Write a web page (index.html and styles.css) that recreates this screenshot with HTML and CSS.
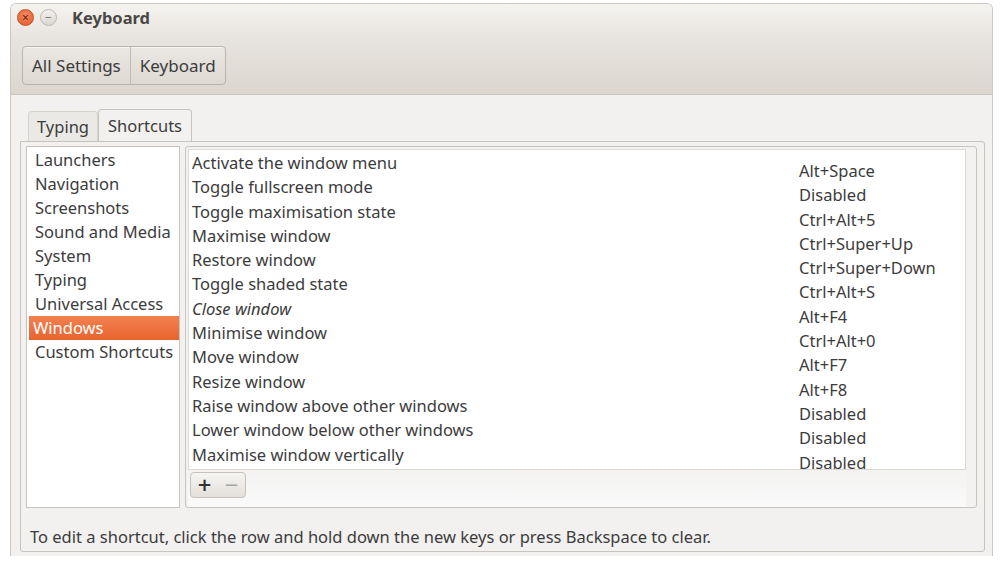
FILE: index.html
```html
<!DOCTYPE html>
<html lang="en">
<head>
    <meta charset="UTF-8">
    <title>Keyboard</title>
    <link rel="stylesheet" href="styles.css">
</head>
<body>
    <div class="window">
        <div class="titlebar">
            <span class="win-btn close-btn">&times;</span>
            <span class="win-btn min-btn">&minus;</span>
            <span class="title">Keyboard</span>
        </div>
        <div class="toolbar">
            <div class="crumbs">
                <button class="crumb">All Settings</button>
                <button class="crumb">Keyboard</button>
            </div>
        </div>
        <div class="content">
            <div class="tabs">
                <div class="tab">Typing</div>
                <div class="tab active">Shortcuts</div>
            </div>
            <div class="notebook">
                <div class="panes">
                    <ul class="sections">
                        <li>Launchers</li>
                        <li>Navigation</li>
                        <li>Screenshots</li>
                        <li>Sound and Media</li>
                        <li>System</li>
                        <li>Typing</li>
                        <li>Universal Access</li>
                        <li class="selected">Windows</li>
                        <li>Custom Shortcuts</li>
                    </ul>
                    <div class="shortcut-frame">
                        <div class="shortcut-list">
                            <ul class="names">
                                <li>Activate the window menu</li>
                                <li>Toggle fullscreen mode</li>
                                <li>Toggle maximisation state</li>
                                <li>Maximise window</li>
                                <li>Restore window</li>
                                <li>Toggle shaded state</li>
                                <li class="italic">Close window</li>
                                <li>Minimise window</li>
                                <li>Move window</li>
                                <li>Resize window</li>
                                <li>Raise window above other windows</li>
                                <li>Lower window below other windows</li>
                                <li>Maximise window vertically</li>
                            </ul>
                            <ul class="accels">
                                <li>Alt+Space</li>
                                <li>Disabled</li>
                                <li>Ctrl+Alt+5</li>
                                <li>Ctrl+Super+Up</li>
                                <li>Ctrl+Super+Down</li>
                                <li>Ctrl+Alt+S</li>
                                <li>Alt+F4</li>
                                <li>Ctrl+Alt+0</li>
                                <li>Alt+F7</li>
                                <li>Alt+F8</li>
                                <li>Disabled</li>
                                <li>Disabled</li>
                                <li>Disabled</li>
                            </ul>
                        </div>
                        <div class="list-toolbar">
                            <div class="add-remove">
                                <button class="small-btn">+</button>
                                <button class="small-btn dim">&minus;</button>
                            </div>
                        </div>
                    </div>
                </div>
                <p class="hint">To edit a shortcut, click the row and hold down the new keys or press Backspace to clear.</p>
            </div>
        </div>
    </div>
</body>
</html>
```

FILE: styles.css
```css
body {
    margin: 0;
    background: #fff;
    font-family: "Noto Sans", "Open Sans", sans-serif;
    font-size: 16.5px;
    color: #3c3c3c;
}

ul {
    list-style: none;
    margin: 0;
    padding: 0;
}

.window {
    margin: 3px 7px 0 10px;
    height: 552px;
    border: 1px solid #cdc8c1;
    border-bottom: none;
    border-radius: 6px 6px 0 0;
    background: #f2f1f0;
    display: flex;
    flex-direction: column;
    overflow: hidden;
}

.titlebar {
    height: 36px;
    display: flex;
    align-items: center;
    padding: 0 0 9px 6px;
    box-sizing: border-box;
    background: linear-gradient(#f5f3f0, #e7e3de);
}

.win-btn {
    width: 15px;
    height: 15px;
    border-radius: 50%;
    display: flex;
    align-items: center;
    justify-content: center;
    font-size: 12px;
    line-height: 1;
    margin-right: 6px;
}

.close-btn {
    background: radial-gradient(circle at 50% 35%, #f58a5f, #e0582a);
    border: 1px solid #c9501f;
    color: #5a2410;
}

.min-btn {
    background: linear-gradient(#f3f1ee, #dad5cf);
    border: 1px solid #bdb8b1;
    color: #7a756f;
}

.title {
    margin-left: 9px;
    font-weight: bold;
    font-size: 16.5px;
    color: #4a4844;
}

.toolbar {
    height: 55px;
    border-bottom: 1px solid #c8c3bc;
    background: linear-gradient(#e7e3de, #dcd6cf);
    display: flex;
    align-items: flex-start;
    padding: 6px 0 0 11px;
    box-sizing: border-box;
}

.crumbs {
    display: flex;
    border: 1px solid #b9b3ab;
    border-radius: 4px;
    background: linear-gradient(#ebe8e4, #ddd8d2);
    height: 37px;
    box-shadow: inset 0 1px 0 #f7f5f2;
}

.crumb {
    font-family: inherit;
    font-size: 17px;
    color: #3c3c3c;
    background: none;
    border: none;
    padding: 0 9px;
}

.crumb + .crumb {
    border-left: 1px solid #c0bab2;
    padding: 0 9px;
}

.content {
    flex: 1;
    display: flex;
    flex-direction: column;
    padding: 15px 7px 4px 9px;
}

.tabs {
    display: flex;
    padding-left: 8px;
    align-items: flex-end;
    height: 32px;
    margin-bottom: -1px;
}

.tab {
    padding: 0 8px;
    height: 30px;
    line-height: 30px;
    border: 1px solid #d6d2cc;
    border-bottom: none;
    border-radius: 4px 4px 0 0;
    background: #ebe9e6;
}

.tab.active {
    padding: 0 9px;
    height: 32px;
    line-height: 32px;
    background: #f2f1f0;
    border-color: #c8c3bc;
}

.notebook {
    flex: 1;
    border: 1px solid #c8c3bc;
    border-radius: 0 3px 3px 3px;
    display: flex;
    flex-direction: column;
    padding: 4px 7px 0 5px;
}

.panes {
    display: flex;
    gap: 5px;
    height: 362px;
}

.sections {
    width: 152px;
    background: #fff;
    border: 1px solid #c8c3bc;
    padding-top: 1px;
}

.sections li {
    height: 24px;
    line-height: 24px;
    padding-left: 8px;
}

.sections li.selected {
    margin-left: 2px;
    padding-left: 4px;
    background: linear-gradient(#f28150, #e8642f);
    color: #fff;
}

.shortcut-frame {
    flex: 1;
    border: 1px solid #c8c3bc;
    border-radius: 3px;
    display: flex;
    flex-direction: column;
    padding: 2px 10px 0 2px;
    background: #f3f2f1;
}

.shortcut-list {
    height: 321px;
    background: #fff;
    border: 1px solid #dcd9d5;
    display: flex;
    justify-content: space-between;
    padding-top: 1px;
    box-sizing: border-box;
}

.shortcut-list li {
    height: 24.3px;
    line-height: 24px;
}

.names {
    padding-left: 3px;
}

.names .italic {
    font-style: italic;
}

.accels {
    width: 166px;
    padding-top: 8px;
}

.list-toolbar {
    flex: 1;
    background: linear-gradient(#f4f3f2, #fafafa);
    padding: 2px 0 0 2px;
}

.add-remove {
    display: inline-flex;
    border: 1px solid #c6c1ba;
    border-radius: 4px;
    background: linear-gradient(#f6f5f3, #e4e0db);
    height: 24px;
}

.small-btn {
    width: 27px;
    border: none;
    background: none;
    font-family: "DejaVu Sans", sans-serif;
    font-size: 18px;
    font-weight: bold;
    line-height: 1;
    color: #333;
    padding: 0;
}

.small-btn.dim {
    color: #a8a4a0;
    font-weight: normal;
}

.hint {
    margin: 0;
    padding: 17px 0 0 4px;
}
```
